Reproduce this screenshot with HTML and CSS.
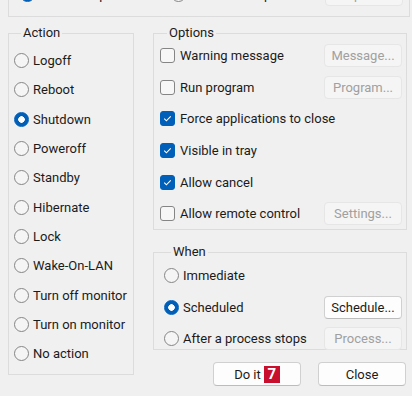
FILE: index.html
```html
<!DOCTYPE html>
<html lang="en">
<head>
  <meta charset="UTF-8">
  <title>Poweroff</title>
  <link rel="stylesheet" href="styles.css">
</head>
<body>
  <div class="window">
    <div class="group top-group">
      <div class="top-row">
        <div class="item"><span class="radio on"></span>Local computer</div>
        <div class="item remote"><span class="radio"></span>Remote computer</div>
        <button class="btn off">Computers...</button>
      </div>
    </div>

    <div class="columns">
      <div class="group action">
        <div class="legend">Action</div>
        <div class="rows">
          <div class="item"><span class="radio"></span>Logoff</div>
          <div class="item"><span class="radio"></span>Reboot</div>
          <div class="item"><span class="radio on"></span>Shutdown</div>
          <div class="item"><span class="radio"></span>Poweroff</div>
          <div class="item"><span class="radio"></span>Standby</div>
          <div class="item"><span class="radio"></span>Hibernate</div>
          <div class="item"><span class="radio"></span>Lock</div>
          <div class="item"><span class="radio"></span>Wake-On-LAN</div>
          <div class="item"><span class="radio"></span>Turn off monitor</div>
          <div class="item"><span class="radio"></span>Turn on monitor</div>
          <div class="item"><span class="radio"></span>No action</div>
        </div>
      </div>

      <div class="right">
        <div class="group options">
          <div class="legend">Options</div>
          <div class="rows">
            <div class="item"><span class="check"></span>Warning message<button class="btn off">Message...</button></div>
            <div class="item"><span class="check"></span>Run program<button class="btn off">Program...</button></div>
            <div class="item"><span class="check on"></span>Force applications to close</div>
            <div class="item"><span class="check on"></span>Visible in tray</div>
            <div class="item"><span class="check on"></span>Allow cancel</div>
            <div class="item"><span class="check"></span>Allow remote control<button class="btn off">Settings...</button></div>
          </div>
        </div>

        <div class="group when">
          <div class="legend">When</div>
          <div class="rows">
            <div class="item"><span class="radio"></span>Immediate</div>
            <div class="item"><span class="radio on"></span>Scheduled<button class="btn">Schedule...</button></div>
            <div class="item"><span class="radio"></span>After a process stops<button class="btn off">Process...</button></div>
          </div>
        </div>

        <div class="actions">
          <button class="btn big">Do it <span class="badge">7</span></button>
          <button class="btn big">Close</button>
        </div>
      </div>
    </div>
  </div>
</body>
</html>
```

FILE: styles.css
```css
body {
  margin: 0;
  background-color: #f0f0f0;
  font-family: Roboto, "Noto Sans", sans-serif;
  font-size: 13px;
  color: #1b1b1b;
  overflow: hidden;
}

.window {
  padding: 0 2px 0 8px;
}

.group {
  border: 1px solid #dcdcdc;
}

.legend {
  width: fit-content;
  margin: -8px 0 0 7px;
  padding: 0 2px;
  line-height: 14px;
  background-color: #f0f0f0;
}

.item {
  display: flex;
  align-items: center;
  white-space: nowrap;
}

/* top group, mostly scrolled out of view */
.top-group {
  margin-top: -18px;
  padding: 0 6px 10px 11px;
}

.top-row {
  display: flex;
  align-items: center;
  height: 23px;
}

.top-row .remote {
  margin-left: 42px;
}

.top-row .btn {
  margin-left: auto;
}

.columns {
  display: flex;
  gap: 19px;
  margin-top: 16px;
}

.action {
  width: 126px;
  height: 342px;
  padding-left: 5px;
  box-sizing: border-box;
}

.action .rows {
  margin-top: 6px;
}

.action .item {
  height: 29.3px;
}

.right {
  width: 254px;
}

.options,
.when {
  padding: 0 4px 0 6px;
}

.options {
  height: 197px;
  box-sizing: border-box;
}

.options .rows {
  margin-top: 0;
}

.when .rows {
  margin-top: 1px;
}

.options .item,
.when .item {
  height: 31.6px;
}

.when {
  margin-top: 22px;
  height: 98px;
  box-sizing: border-box;
  padding-left: 10px;
}

.item .btn {
  margin-left: auto;
}

/* radio buttons and check boxes */
.radio {
  width: 13px;
  height: 13px;
  margin-right: 4px;
  border: 1px solid #858585;
  border-radius: 50%;
  background-color: #f5f5f5;
  flex-shrink: 0;
}

.radio.on {
  border-color: #005fb8;
  background: radial-gradient(circle, #fff 0 3px, #005fb8 3.5px);
}

.check {
  width: 13px;
  height: 13px;
  margin-right: 5px;
  border: 1px solid #858585;
  border-radius: 3px;
  background-color: #f7f7f7;
  flex-shrink: 0;
}

.check.on {
  border-color: #005fb8;
  background: #005fb8 url("data:image/svg+xml,%3Csvg xmlns='http://www.w3.org/2000/svg' viewBox='0 0 14 14'%3E%3Cpath d='M3.5 7.2l2.3 2.3 4.7-4.8' fill='none' stroke='white' stroke-width='1.2'/%3E%3C/svg%3E") center / 100% no-repeat;
}

/* buttons */
.btn {
  width: 78px;
  height: 23px;
  padding: 0;
  font: inherit;
  color: #1b1b1b;
  background-color: #fdfdfd;
  border: 1px solid #d0d0d0;
  border-bottom-color: #bcbcbc;
  border-radius: 4px;
}

.btn.off {
  color: #a0a0a0;
  background-color: #f5f5f5;
  border-color: #e6e6e6;
}

.actions {
  display: flex;
  justify-content: flex-end;
  gap: 17px;
  margin: 12px 1px 0 0;
}

.btn.big {
  width: 88px;
  height: 24px;
  display: flex;
  align-items: center;
  justify-content: center;
  gap: 3px;
}

.badge {
  display: inline-block;
  width: 16px;
  height: 17px;
  line-height: 17px;
  text-align: center;
  font-weight: bold;
  font-size: 15px;
  color: #fff;
  background-color: #c8102e;
}
```
